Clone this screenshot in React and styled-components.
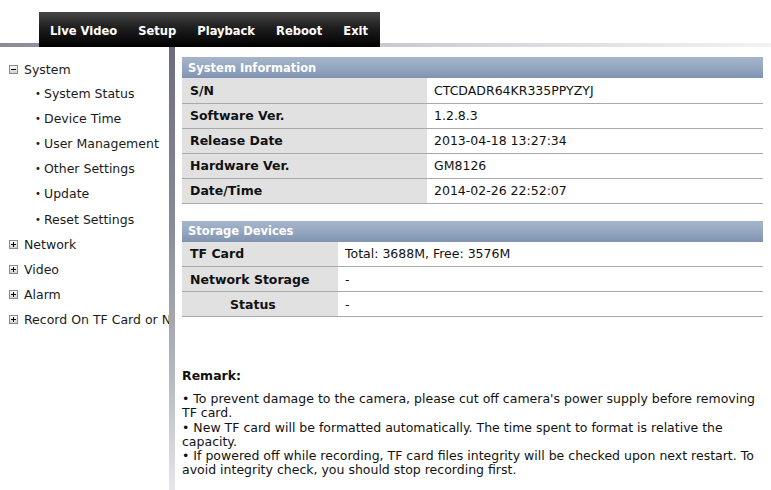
import styled, { createGlobalStyle } from "styled-components";

const Global = createGlobalStyle`
  html, body {
    margin: 0;
    padding: 0;
    background: #fff;
  }
  body {
    font-family: "DejaVu Sans", Verdana, sans-serif;
    color: #111;
  }
`;

const Header = styled.header`
  height: 47px;
  display: flex;
  align-items: flex-end;
  padding-left: 39px;
  background-image: linear-gradient(to right, #8a8a96 0%, #bfbfc6 40%, #dcdce0 70%, #f2f2f2 100%);
  background-size: 100% 4px;
  background-position: left bottom;
  background-repeat: no-repeat;
`;

const NavBar = styled.nav`
  height: 35px;
  width: 341px;
  box-sizing: border-box;
  padding-left: 11px;
  display: flex;
  align-items: center;
  gap: 21px;
  background: linear-gradient(to bottom, #474747 0%, #1e1e1e 45%, #000 100%);
`;

const NavLink = styled.a`
  color: #fff;
  font-family: "DejaVu Sans Condensed", "DejaVu Sans", sans-serif;
  font-weight: 700;
  font-size: 12.8px;
  text-decoration: none;
  cursor: pointer;
  padding-top: 2px;
`;

const Body = styled.div`
  display: flex;
  min-height: 443px;
`;

const Sidebar = styled.aside`
  width: 169px;
  flex: none;
  overflow: hidden;
  white-space: nowrap;
  padding-top: 11px;
  box-sizing: border-box;
`;

const Divider = styled.div`
  width: 6px;
  flex: none;
  background: linear-gradient(to bottom, #6c6b82 0%, #8a8a9c 40%, #b8b8c2 75%, #e6e6ea 100%);
`;

const TreeItem = styled.div`
  display: flex;
  align-items: center;
  height: ${(p) => p.$h || 25}px;
  padding-left: ${(p) => (p.$child ? 35 : 9)}px;
  font-size: 12.5px;
  color: #1a1a1a;
`;

const Bullet = styled.span`
  width: 9px;
  font-size: 10px;
`;

const Toggle = styled.svg`
  width: 9px;
  height: 9px;
  margin-right: 6px;
  flex: none;
`;

const Content = styled.main`
  flex: 1;
  padding: 10px 8px 0 7px;
`;

const Table = styled.table`
  width: 100%;
  border-collapse: collapse;
  margin-bottom: 17px;
  font-size: 12.5px;
`;

const Caption = styled.th`
  text-align: left;
  height: 21px;
  padding: 0 6px;
  color: #fff;
  font-size: 11.5px;
  font-weight: 700;
  background: linear-gradient(to bottom, #a5b5cb 0%, #93a5bf 55%, #7f93b0 100%);
`;

const Row = styled.tr`
  height: 25px;
  border-bottom: 1px solid #a9a9a9;
`;

const Label = styled.td`
  width: ${(p) => p.$w}px;
  background: #e1e1e1;
  font-weight: 700;
  padding: 0 0 0 ${(p) => (p.$indent ? 48 : 8)}px;
  box-sizing: border-box;
`;

const Value = styled.td`
  padding: 0 7px;
  background: #fff;
`;

const Remark = styled.section`
  margin-top: 52px;
  font-size: 12.5px;
  line-height: 14.2px;
  color: #111;
`;

const RemarkTitle = styled.div`
  font-weight: 700;
  margin-bottom: 9px;
`;

const PlusMinus = ({ open }) => (
  <Toggle viewBox="0 0 9 9">
    <defs>
      <linearGradient id={open ? "gm" : "gp"} x1="0" y1="0" x2="0" y2="1">
        <stop offset="0" stopColor="#fff" />
        <stop offset="1" stopColor="#cfcfcf" />
      </linearGradient>
    </defs>
    <rect x="0.5" y="0.5" width="8" height="8" fill={`url(#${open ? "gm" : "gp"})`} stroke="#8a8a8a" />
    <rect x="2" y="4" width="5" height="1" fill="#000" />
    {!open && <rect x="4" y="2" width="1" height="5" fill="#000" />}
  </Toggle>
);

const systemInfo = [
  ["S/N", "CTCDADR64KR335PPYZYJ"],
  ["Software Ver.", "1.2.8.3"],
  ["Release Date", "2013-04-18 13:27:34"],
  ["Hardware Ver.", "GM8126"],
  ["Date/Time", "2014-02-26 22:52:07"],
];

const storage = [
  ["TF Card", "Total: 3688M, Free: 3576M"],
  ["Network Storage", "-"],
  ["Status", "-", true],
];

export default function App() {
  return (
    <>
      <Global />
      <Header>
        <NavBar>
          {["Live Video", "Setup", "Playback", "Reboot", "Exit"].map((n) => (
            <NavLink key={n}>{n}</NavLink>
          ))}
        </NavBar>
      </Header>
      <Body>
        <Sidebar>
          <TreeItem $h={23}>
            <PlusMinus open />
            System
          </TreeItem>
          {["System Status", "Device Time", "User Management", "Other Settings", "Update", "Reset Settings"].map((s, i) => (
            <TreeItem $child key={s} $h={i === 5 ? 26 : 25}>
              <Bullet>•</Bullet>
              {s}
            </TreeItem>
          ))}
          {["Network", "Video", "Alarm", "Record On TF Card or NAS"].map((s) => (
            <TreeItem key={s}>
              <PlusMinus />
              {s}
            </TreeItem>
          ))}
        </Sidebar>
        <Divider />
        <Content>
          <Table>
            <thead>
              <tr>
                <Caption colSpan={2}>System Information</Caption>
              </tr>
            </thead>
            <tbody>
              {systemInfo.map(([k, v]) => (
                <Row key={k}>
                  <Label $w={245}>{k}</Label>
                  <Value>{v}</Value>
                </Row>
              ))}
            </tbody>
          </Table>
          <Table>
            <thead>
              <tr>
                <Caption colSpan={2}>Storage Devices</Caption>
              </tr>
            </thead>
            <tbody>
              {storage.map(([k, v, indent]) => (
                <Row key={k}>
                  <Label $w={156} $indent={indent}>{k}</Label>
                  <Value>{v}</Value>
                </Row>
              ))}
            </tbody>
          </Table>
          <Remark>
            <RemarkTitle>Remark:</RemarkTitle>
            <div>• To prevent damage to the camera, please cut off camera's power supply before removing TF card.</div>
            <div>• New TF card will be formatted automatically. The time spent to format is relative the capacity.</div>
            <div>• If powered off while recording, TF card files integrity will be checked upon next restart. To avoid integrity check, you should stop recording first.</div>
          </Remark>
        </Content>
      </Body>
    </>
  );
}
